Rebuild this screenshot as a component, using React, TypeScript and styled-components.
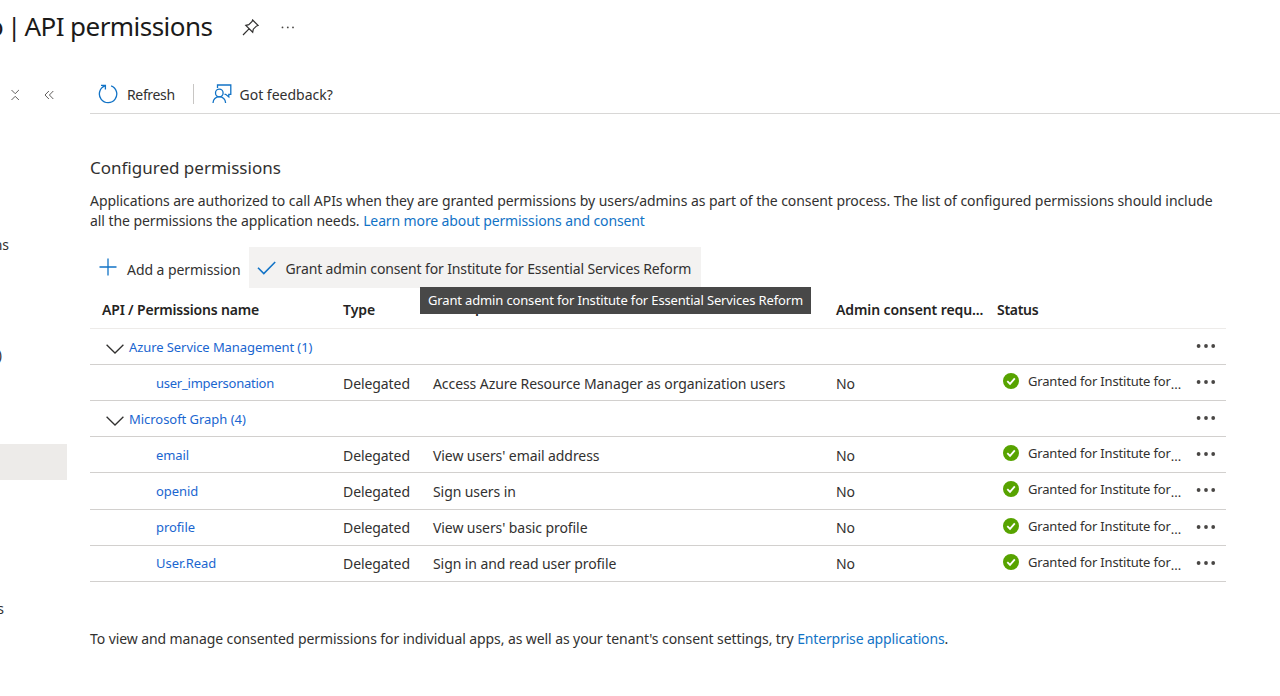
import React from "react";
import styled, { createGlobalStyle } from "styled-components";

const Global = createGlobalStyle`
  * { box-sizing: border-box; }
  body { margin: 0; background: #fff; overflow: hidden; }
  body, button { font-family: "Noto Sans", "Open Sans", sans-serif; color: #323130; font-size: 14px; }
`;

const Page = styled.div`
  width: 1280px;
  height: 696px;
  overflow: hidden;
  background: #fff;
`;
const Header = styled.header`
  display: flex;
  align-items: center;
  height: 54px;
  color: #1b1a19;
`;
const Title = styled.h1`
  margin: 0 0 2px -12px;
  width: 227px;
  font-size: 26px;
  line-height: 36px;
  font-weight: 400;
  letter-spacing: -0.55px;
  white-space: nowrap;
`;
const TitlePrefix = styled.span`
  letter-spacing: -0.3px;
  word-spacing: -3px;
`;
const HeaderIcons = styled.div`
  display: flex;
  align-items: center;
  gap: 22px;
  padding-left: 27px;
`;
const Body = styled.div`
  display: flex;
`;
const Sidebar = styled.nav`
  width: 90px;
  height: 642px;
  flex: none;
  overflow: hidden;
`;
const SideTools = styled.div`
  display: flex;
  gap: 24px;
  align-items: center;
  height: 81px;
  padding-left: 10px;
`;
const SideItem = styled.div<{ $top: number; $end: number; $active?: boolean }>`
  margin-top: ${(p) => p.$top}px;
  height: 36px;
  width: ${(p) => p.$end}px;
  display: flex;
  align-items: center;
  justify-content: flex-end;
  line-height: 20px;
  background: ${(p) => (p.$active ? "#edebe9" : "transparent")};
`;
const Main = styled.main`
  flex: 1;
  min-width: 0;
`;
const Toolbar = styled.div`
  display: flex;
  align-items: center;
  height: 60px;
  padding: 21px 0 0 8px;
  border-bottom: 1px solid #d8d7d6;
`;
const Command = styled.button<{ $active?: boolean; $gap?: number; $width?: number; $spacing?: number }>`
  display: flex;
  align-items: center;
  flex: none;
  gap: ${(p) => p.$gap ?? 9}px;
  height: ${(p) => (p.$active ? 41 : 40)}px;
  width: ${(p) => (p.$width ? `${p.$width}px` : "auto")};
  border: 0;
  padding: 0 0 0 ${(p) => (p.$active ? 8 : 0)}px;
  background: ${(p) => (p.$active ? "#f3f2f1" : "transparent")};
  letter-spacing: ${(p) => p.$spacing ?? 0}px;
  white-space: nowrap;
`;
const CommandLabel = styled.span<{ $drop: number }>`
  padding-top: ${(p) => p.$drop}px;
`;
const Divider = styled.span`
  width: 1px;
  height: 20px;
  background: #c8c6c4;
  margin: 0 18px 0 0;
`;
const Section = styled.section`
  width: 1136px;
  padding-top: 42px;
`;
const Heading = styled.h2`
  margin: 0;
  font-size: 17px;
  line-height: 24px;
  font-weight: 400;
`;
const Paragraph = styled.p<{ $top: number; $spacing: number }>`
  margin: ${(p) => p.$top}px 0 0;
  line-height: 20px;
  letter-spacing: ${(p) => p.$spacing}px;
  white-space: nowrap;
`;
const Link = styled.a<{ $blue?: boolean; $spacing?: number }>`
  color: ${(p) => (p.$blue ? "#1a66d0" : "#1273c6")};
  letter-spacing: ${(p) => (p.$spacing === undefined ? "inherit" : `${p.$spacing}px`)};
  text-decoration: none;
`;
const Actions = styled.div`
  position: relative;
  display: flex;
  height: 41px;
  margin-top: 16px;
  padding-left: 9px;
`;
const Tooltip = styled.div`
  position: absolute;
  left: 330px;
  top: 40px;
  width: 391px;
  height: 27px;
  padding-left: 8px;
  background: #484848;
  color: #fff;
  font-size: 13px;
  line-height: 26px;
  letter-spacing: -0.15px;
  white-space: nowrap;
`;
const Row = styled.div<{ $head?: boolean }>`
  display: grid;
  grid-template-columns: 253px 90px 403px 161px 199px 30px;
  align-items: center;
  height: ${(p) => (p.$head ? 41 : 36.12)}px;
  padding-top: ${(p) => (p.$head ? 3 : 2)}px;
  border-bottom: 1px solid ${(p) => (p.$head ? "#edebe9" : "#d2d0ce")};
  font-weight: ${(p) => (p.$head ? 600 : 400)};
  color: ${(p) => (p.$head ? "#242322" : "#323130")};
  line-height: 20px;
  white-space: nowrap;
`;
const Cell = styled.div<{ $indent?: number; $lift?: number; $size?: number; $spacing?: number }>`
  display: flex;
  align-items: center;
  padding-left: ${(p) => p.$indent ?? 0}px;
  padding-bottom: ${(p) => p.$lift ?? 0}px;
  font-size: ${(p) => p.$size ?? 14}px;
  letter-spacing: ${(p) => p.$spacing ?? -0.08}px;
`;
const Granted = styled.span`
  margin-left: 9px;
`;
const Ellipsis = styled.span`
  padding-top: 6px;
  letter-spacing: 0;
`;
const ChevronIcon = styled.svg`
  margin: 4px 5px 0 0;
`;

const Dots = () => (
  <svg width="20" height="6" viewBox="0 0 20 6" fill="#484644">
    <circle cx="2.6" cy="3" r="1.9" />
    <circle cx="10" cy="3" r="1.9" />
    <circle cx="17.2" cy="3" r="1.9" />
  </svg>
);
const Chevron = () => (
  <ChevronIcon width="18" height="10" viewBox="0 0 18 10" fill="none" stroke="#323130" strokeWidth="1.3">
    <path d="M.6.7 9 9 17.4.7" />
  </ChevronIcon>
);
const Check = () => (
  <svg width="16" height="16" viewBox="0 0 16 16">
    <circle cx="8" cy="8" r="8" fill="#57a300" />
    <path d="M4.3 8.2 7 10.9 11.8 5.3" fill="none" stroke="#fff" strokeWidth="1.8" />
  </svg>
);

type Item = { name: string; group?: boolean; description?: string; spacing?: number };
const items: Item[] = [
  { name: "Azure Service Management (1)", group: true },
  { name: "user_impersonation", description: "Access Azure Resource Manager as organization users", spacing: -0.24 },
  { name: "Microsoft Graph (4)", group: true, spacing: -0.04 },
  { name: "email", description: "View users' email address" },
  { name: "openid", description: "Sign users in" },
  { name: "profile", description: "View users' basic profile" },
  { name: "User.Read", description: "Sign in and read user profile", spacing: -0.03 },
];

export default function App() {
  return (
    <Page>
      <Global />
      <Header>
        <Title>
          <TitlePrefix>o | </TitlePrefix>API permissions
        </Title>
        <HeaderIcons>
          <svg width="17" height="17" viewBox="0 0 17 17" fill="none" stroke="#323130" strokeWidth="1.2">
            <path d="M10.6 1 16 6.4 14.6 6.9 11.3 10.2 10.7 13.2 3.8 6.3 6.8 5.7 10.1 2.4ZM7 9.8 1 16" />
          </svg>
          <svg width="14" height="4" viewBox="0 0 14 4" fill="#484644">
            <circle cx="1.5" cy="2.4" r=".9" />
            <circle cx="6.8" cy="2.4" r=".9" />
            <circle cx="12" cy="2.4" r=".9" />
          </svg>
        </HeaderIcons>
      </Header>
      <Body>
        <Sidebar>
          <SideTools>
            <svg width="10" height="12" viewBox="0 0 10 12" fill="none" stroke="#605e5c" strokeWidth="1">
              <path d="M1.5 1 5.2 4.7 8.9 1M1.5 11 5.2 7.3 8.9 11" />
            </svg>
            <svg width="10" height="10" viewBox="0 0 10 10" fill="none" stroke="#605e5c" strokeWidth="1">
              <path d="M4.9 1 1 5 4.9 9M9.3 1 5.4 5 9.3 9" />
            </svg>
          </SideTools>
          <SideItem $top={92} $end={9}>ns</SideItem>
          <SideItem $top={74} $end={2}>)</SideItem>
          <SideItem $top={71} $end={67} $active />
          <SideItem $top={111} $end={4}>s</SideItem>
        </Sidebar>
        <Main>
          <Toolbar>
            <Command $width={95} $spacing={-0.35}>
              <svg width="20" height="20" viewBox="0 0 20 20" fill="none" stroke="#1273c6" strokeWidth="1.3">
                <path d="M13.1 1.8A8.7 8.7 0 1 1 6.8 1.9M3 1.3H7.4V5.6" />
              </svg>
              Refresh
            </Command>
            <Divider />
            <Command $gap={7.5}>
              <svg width="20" height="20" viewBox="0 0 20 20" fill="none" stroke="#1273c6" strokeWidth="1.3">
                <path d="M5.5 4V1H18.8V10.3H16.8V12.9L13.7 10.3H12.5" />
                <circle cx="7.3" cy="9" r="3.8" />
                <path d="M1 19A6.3 6.3 0 0 1 13.6 19" />
              </svg>
              Got feedback?
            </Command>
          </Toolbar>
          <Section>
            <Heading>Configured permissions</Heading>
            <Paragraph $top={11} $spacing={-0.07}>
              Applications are authorized to call APIs when they are granted permissions by users/admins as part of the consent process. The list of configured permissions should include
              <br />
              all the permissions the application needs. <Link $spacing={-0.12}>Learn more about permissions and consent</Link>
            </Paragraph>
            <Actions>
              <Command $width={150} $spacing={-0.06} $gap={10}>
                <svg width="18" height="18" viewBox="0 0 18 18" fill="none" stroke="#1273c6" strokeWidth="1.3">
                  <path d="M9 .5V17.5M.5 9H17.5" />
                </svg>
                <CommandLabel $drop={4}>Add a permission</CommandLabel>
              </Command>
              <Command $active $width={452} $spacing={-0.13} $gap={9.5}>
                <svg width="19" height="14" viewBox="0 0 19 14" fill="none" stroke="#1273c6" strokeWidth="1.6">
                  <path d="M1 6.7 6.8 12.5 18.2 1" />
                </svg>
                <CommandLabel $drop={2}>Grant admin consent for Institute for Essential Services Reform</CommandLabel>
              </Command>
              <Tooltip>Grant admin consent for Institute for Essential Services Reform</Tooltip>
            </Actions>
            <Row $head>
              <Cell $indent={12} $spacing={-0.18}>API / Permissions name</Cell>
              <Cell $spacing={0}>Type</Cell>
              <Cell $lift={4}>Description</Cell>
              <Cell $spacing={-0.1}>Admin consent requ...</Cell>
              <Cell $spacing={-0.3}>Status</Cell>
            </Row>
            {items.map((it) => (
              <Row key={it.name}>
                <Cell $indent={it.group ? 16 : 66} $lift={2} $size={13} $spacing={it.spacing ?? -0.08}>
                  {it.group && <Chevron />}
                  <Link $blue>{it.name}</Link>
                </Cell>
                <Cell>{it.group ? "" : "Delegated"}</Cell>
                <Cell>{it.description}</Cell>
                <Cell>{it.group ? "" : "No"}</Cell>
                <Cell $indent={6} $lift={5} $size={13} $spacing={-0.17}>
                  {!it.group && (
                    <>
                      <Check />
                      <Granted>Granted for Institute for</Granted>
                      <Ellipsis>...</Ellipsis>
                    </>
                  )}
                </Cell>
                <Cell $lift={3}>
                  <Dots />
                </Cell>
              </Row>
            ))}
            <Paragraph $top={47} $spacing={-0.09}>
              To view and manage consented permissions for individual apps, as well as your tenant's consent settings, try <Link $spacing={-0.15}>Enterprise applications</Link>.
            </Paragraph>
          </Section>
        </Main>
      </Body>
    </Page>
  );
}
